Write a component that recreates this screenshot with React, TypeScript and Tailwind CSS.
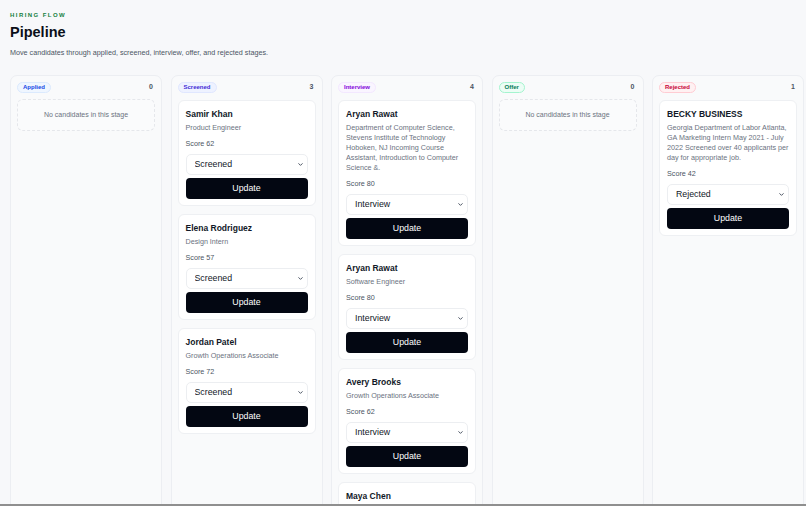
import React from 'react';
import { ChevronDown } from 'lucide-react';

type Candidate = { name: string; detail: string; score: number };

type Stage = {
  key: string;
  label: string;
  badge: string;
  items: Candidate[];
};

const STAGES: Stage[] = [
  {
    key: 'Applied',
    label: 'Applied',
    badge: 'bg-blue-50 border-blue-100 text-blue-700',
    items: [],
  },
  {
    key: 'Screened',
    label: 'Screened',
    badge: 'bg-indigo-50 border-indigo-100 text-indigo-700',
    items: [
      { name: 'Samir Khan', detail: 'Product Engineer', score: 62 },
      { name: 'Elena Rodriguez', detail: 'Design Intern', score: 57 },
      { name: 'Jordan Patel', detail: 'Growth Operations Associate', score: 72 },
    ],
  },
  {
    key: 'Interview',
    label: 'Interview',
    badge: 'bg-purple-50 border-purple-100 text-purple-700',
    items: [
      {
        name: 'Aryan Rawat',
        detail:
          'Department of Computer Science, Stevens Institute of Technology Hoboken, NJ Incoming Course Assistant, Introduction to Computer Science &.',
        score: 80,
      },
      { name: 'Aryan Rawat', detail: 'Software Engineer', score: 80 },
      { name: 'Avery Brooks', detail: 'Growth Operations Associate', score: 62 },
      { name: 'Maya Chen', detail: 'Data Analyst', score: 74 },
    ],
  },
  {
    key: 'Offer',
    label: 'Offer',
    badge: 'bg-emerald-50 border-emerald-200 text-emerald-700',
    items: [],
  },
  {
    key: 'Rejected',
    label: 'Rejected',
    badge: 'bg-rose-50 border-rose-200 text-rose-700',
    items: [
      {
        name: 'BECKY BUSINESS',
        detail:
          'Georgia Department of Labor Atlanta, GA Marketing Intern May 2021 - July 2022 Screened over 40 applicants per day for appropriate job.',
        score: 42,
      },
    ],
  },
];

const CandidateCard = ({ c, stage }: { c: Candidate; stage: string }) => (
  <div className="bg-white border border-[#eef0f3] rounded-[6px] px-[7px] pt-[7px] pb-[6px]">
    <p className="text-[8.5px] leading-[12px] font-bold text-[#111827]">{c.name}</p>
    <p className="mt-[3px] text-[7.2px] leading-[10px] text-[#6b7280]">{c.detail}</p>
    <p className="mt-[6px] text-[7.2px] leading-[10px] text-[#4b5563]">Score {c.score}</p>
    <div className="relative mt-[5px] h-[21px]">
      <select
        defaultValue={stage}
        className="block w-full h-[21px] appearance-none bg-white border border-[#eceef1] rounded-[5px] pl-[8px] pr-4 text-[8.8px] leading-[19px] text-[#111827] outline-none"
      >
        {STAGES.map((s) => (
          <option key={s.key} value={s.key}>
            {s.label}
          </option>
        ))}
      </select>
      <ChevronDown
        size={7}
        strokeWidth={3}
        className="absolute right-[4px] top-[7px] text-[#374151] pointer-events-none"
      />
    </div>
    <button className="block mt-[3px] w-full h-[21px] rounded-[4px] bg-[#030712] text-white text-[8.8px] leading-[21px] font-medium">
      Update
    </button>
  </div>
);

const App = () => {
  return (
    <div
      className="h-screen overflow-hidden bg-[#f7f8fa] px-[10px] pt-[12px]"
      style={{ fontFamily: '"Liberation Sans", Arial, sans-serif' }}
    >
      <p className="text-[6px] leading-[7px] font-bold tracking-[0.24em] text-[#15803d] uppercase">Hiring Flow</p>
      <h1 className="mt-[3px] text-[14.5px] leading-[20px] font-bold text-[#0b0f19]">Pipeline</h1>
      <p className="mt-[6px] text-[7.2px] leading-[10px] text-[#4b5563]">
        Move candidates through applied, screened, interview, offer, and rejected stages.
      </p>

      <div className="mt-[17px] flex gap-[8.5px] h-[480px]">
        {STAGES.map((s) => (
          <div
            key={s.key}
            className="w-[152px] shrink-0 bg-[#f9fafb] border border-[#eceef2] rounded-[7px] px-[6px] pt-[6px]"
          >
            <div className="flex items-center justify-between pr-[2px]">
              <span
                className={`h-[11px] px-[5px] flex items-center rounded-full border text-[6px] font-bold ${s.badge}`}
              >
                {s.label}
              </span>
              <span className="text-[7px] font-semibold text-[#4b5563]">{s.items.length}</span>
            </div>
            <div className="mt-[7px] flex flex-col gap-[8px]">
              {s.items.length === 0 ? (
                <div className="h-[32px] -mt-[1px] flex items-center justify-center border border-dashed border-[#e5e7eb] rounded-[6px] bg-[#fafbfc] text-[7px] text-[#6b7280]">
                  No candidates in this stage
                </div>
              ) : (
                s.items.map((c, i) => <CandidateCard key={i} c={c} stage={s.key} />)
              )}
            </div>
          </div>
        ))}
      </div>
      <div className="fixed bottom-0 left-0 right-0 h-[2px] bg-[#8f8f8f]" />
    </div>
  );
};

export default App;
